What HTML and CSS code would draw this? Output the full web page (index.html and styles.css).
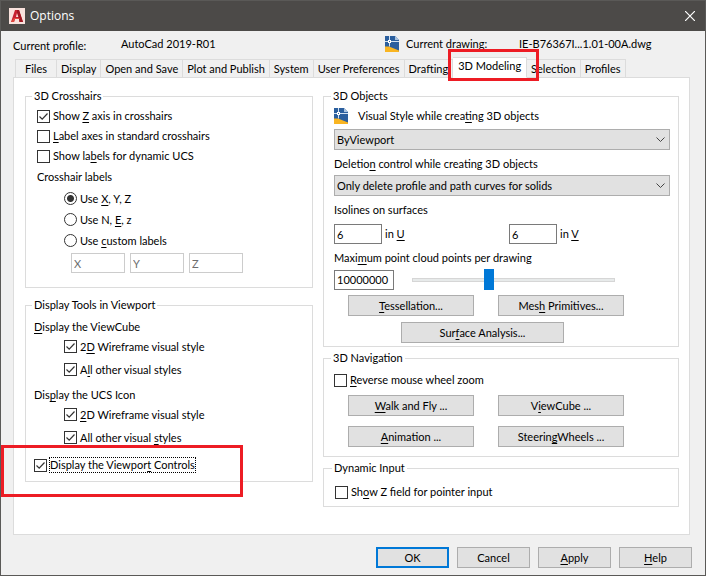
FILE: index.html
```
<!DOCTYPE html>
<html lang="en">
    <head>
        <title>Options</title>
        <meta charset="utf-8">
        <link rel="stylesheet" href="styles.css">
    </head>
    <body>
        <!-- dwg file icon, used twice -->
        <svg class="symbols" width="0" height="0">
            <symbol id="dwg" viewBox="0 0 14 16">
                <path d="M0 0h10l4 4v11H0z" fill="#2b5f9e"/>
                <path d="M10 0l4 4h-4z" fill="#a9c3df"/>
                <path d="M0 10.500h4l10 4V16H0z" fill="#f9b522"/>
                <path d="M0 5.500h14M4.500 0v10.500" stroke="#d5e3f1" fill="none"/>
                <rect x="3.500" y="4.500" width="2" height="2" fill="#2b5f9e" stroke="#fff"/>
            </symbol>
        </svg>
        <div class="window">
            <header class="titlebar">
                <svg class="logo" viewBox="0 0 16 16">
                    <rect width="16" height="16" fill="#f9e2dd"/>
                    <path d="M2 14L6 2h4l4 12h-3.500L10 11H6l-1 3z" fill="#c8202f"/>
                    <path d="M8 2h2l4 12h-3.500L10 11 8 5z" fill="#a01822"/>
                    <path d="M7 9l1-4 1.300 4z" fill="#f9e2dd"/>
                    <path d="M2 14l3-4h5l1 1H6l-1 3z" fill="#e0483f"/>
                </svg>
                <h1 class="title">Options</h1>
                <button class="close" aria-label="Close">
                    <svg viewBox="0 0 10 10"><path d="M0 0l10 10M10 0L0 10" stroke="#fff" stroke-width="1.200"/></svg>
                </button>
            </header>

            <div class="info">
                <span class="info-label">Current profile:</span>
                <span>AutoCad 2019-R01</span>
                <svg class="dwg"><use href="#dwg"/></svg>
                <span>Current drawing:</span>
                <span>IE-B76367I...1.01-00A.dwg</span>
            </div>

            <nav class="tabs" role="tablist">
                <button class="tab" role="tab">Files</button>
                <button class="tab" role="tab">Display</button>
                <button class="tab" role="tab">Open and Save</button>
                <button class="tab" role="tab">Plot and Publish</button>
                <button class="tab" role="tab">System</button>
                <button class="tab" role="tab">User Preferences</button>
                <button class="tab" role="tab">Drafting</button>
                <button class="tab active" role="tab" aria-selected="true">3D Modeling<span class="mark mark-tab"></span></button>
                <button class="tab" role="tab">Selection</button>
                <button class="tab" role="tab">Profiles</button>
            </nav>

            <main class="panel">
                <div class="column left">
                    <fieldset class="group crosshairs">
                        <legend>3D Crosshairs</legend>
                        <label class="check"><input type="checkbox" checked><span>Show <u>Z</u> axis in crosshairs</span></label>
                        <label class="check"><input type="checkbox"><span><u>L</u>abel axes in standard crosshairs</span></label>
                        <label class="check"><input type="checkbox"><span>Show la<u>b</u>els for dynamic UCS</span></label>
                        <p class="caption">Crosshair labels</p>
                        <div class="radios">
                            <label class="check"><input type="radio" name="labels" checked><span>Use <u>X</u>, Y, Z</span></label>
                            <label class="check"><input type="radio" name="labels"><span>Use N, <u>E</u>, z</span></label>
                            <label class="check"><input type="radio" name="labels"><span>Use <u>c</u>ustom labels</span></label>
                        </div>
                        <div class="axes">
                            <input type="text" value="X" aria-label="X label" disabled>
                            <input type="text" value="Y" aria-label="Y label" disabled>
                            <input type="text" value="Z" aria-label="Z label" disabled>
                        </div>
                    </fieldset>

                    <fieldset class="group tools">
                        <legend>Display Tools in Viewport</legend>
                        <p class="caption"><u>D</u>isplay the ViewCube</p>
                        <div class="styles">
                            <label class="check"><input type="checkbox" checked><span>2<u>D</u> Wireframe visual style</span></label>
                            <label class="check"><input type="checkbox" checked><span>A<u>l</u>l other visual styles</span></label>
                        </div>
                        <p class="caption">Dis<u>p</u>lay the UCS Icon</p>
                        <div class="styles">
                            <label class="check"><input type="checkbox" checked><span><u>2</u>D Wireframe visual style</span></label>
                            <label class="check"><input type="checkbox" checked><span>All other visual <u>s</u>tyles</span></label>
                        </div>
                        <div class="controls">
                            <label class="check"><input type="checkbox" checked><span class="focused">Display the Viewpor<u>t</u> Controls</span></label>
                            <span class="mark mark-controls"></span>
                        </div>
                    </fieldset>
                </div>

                <div class="column right">
                    <fieldset class="group objects">
                        <legend>3D Objects</legend>
                        <label class="with-icon" for="style"><svg class="dwg"><use href="#dwg"/></svg><span>Visual Style while crea<u>t</u>ing 3D objects</span></label>
                        <select id="style"><option>ByViewport</option></select>
                        <label class="caption" for="deletion">Deletio<u>n</u> control while creating 3D objects</label>
                        <select id="deletion"><option>Only delete profile and path curves for solids</option></select>
                        <p class="caption">Isolines on surfaces</p>
                        <div class="isolines">
                            <label><input type="text" value="6"><span>in <u>U</u></span></label>
                            <label><input type="text" value="6"><span>in <u>V</u></span></label>
                        </div>
                        <label class="caption" for="points">Maxi<u>m</u>um point cloud points per drawing</label>
                        <div class="points">
                            <input type="text" id="points" value="10000000">
                            <input type="range" aria-label="Point cloud points" min="0" max="100" value="37">
                        </div>
                        <div class="buttons">
                            <button class="btn"><u>T</u>essellation...</button>
                            <button class="btn">Mes<u>h</u> Primitives...</button>
                        </div>
                        <button class="btn surface">Sur<u>f</u>ace Analysis...</button>
                    </fieldset>

                    <fieldset class="group navigation">
                        <legend>3D Navigation</legend>
                        <label class="check"><input type="checkbox"><span><u>R</u>everse mouse wheel zoom</span></label>
                        <div class="buttons">
                            <button class="btn"><u>W</u>alk and Fly ...</button>
                            <button class="btn">V<u>i</u>ewCube ...</button>
                            <button class="btn"><u>A</u>nimation ...</button>
                            <button class="btn">Steerin<u>g</u>Wheels ...</button>
                        </div>
                    </fieldset>

                    <fieldset class="group dynamic">
                        <legend>Dynamic Input</legend>
                        <label class="check"><input type="checkbox"><span>Sh<u>o</u>w Z field for pointer input</span></label>
                    </fieldset>
                </div>
            </main>

            <footer class="footer">
                <button class="btn default">OK</button>
                <button class="btn">Cancel</button>
                <button class="btn"><u>A</u>pply</button>
                <button class="btn"><u>H</u>elp</button>
            </footer>
        </div>
    </body>
</html>
```
FILE: styles.css
```
*
{
    box-sizing: border-box;
}
body
{
    margin: 0;
    font-family: Lato, "Liberation Sans", sans-serif;
    font-size: 11px;
    line-height: 14px;
    color: #000;
}
button, input, select
{
    font: inherit;
    color: inherit;
    margin: 0;
}
p
{
    margin: 0;
}
u
{
    text-underline-offset: 2px;
    text-decoration-skip-ink: none;
}
.symbols
{
    position: absolute;
}
.window
{
    display: flex;
    flex-direction: column;
    min-height: 100vh;
    border: 1px solid #5a5957;
    background: #f0f0f0;
}

/* title bar */
.titlebar
{
    display: flex;
    align-items: center;
    height: 30px;
    padding: 0 10px 0 8px;
    background: #4c4a48;
    color: #fff;
}
.logo
{
    width: 16px;
    height: 16px;
}
.title
{
    flex: 1;
    margin: 0 0 0 5px;
    font-family: "Open Sans", "Noto Sans", sans-serif;
    font-size: 12px;
    font-weight: normal;
}
.close
{
    display: flex;
    padding: 0;
    border: 0;
    background: none;
}
.close svg
{
    width: 10px;
    height: 10px;
}

/* profile and drawing */
.info
{
    display: grid;
    grid-template-columns: 108fr 264fr 21px 113fr 186fr;
    align-items: center;
    height: 26px;
    padding-left: 12px;
}
.info-label
{
    padding-top: 3px;
}
.dwg
{
    width: 14px;
    height: 16px;
}

/* tabs */
.tabs
{
    display: flex;
    align-items: flex-end;
    height: 21px;
    padding-left: 14px;
    margin-bottom: -1px;
}
.tab
{
    min-width: 42px;
    height: 19px;
    padding: 0 4px;
    border: 1px solid #dcdcdc;
    border-left-width: 0;
    background: #f0f0f0;
    white-space: nowrap;
}
.tab:first-child
{
    border-left-width: 1px;
}
.tab.active
{
    position: relative;
    height: 21px;
    padding: 0 5px 3px;
    border-bottom-color: #fff;
    background: #fff;
}

/* red frames */
.mark
{
    position: absolute;
    z-index: 1;
    border: 3px solid #ed1c24;
    pointer-events: none;
}
.mark-tab
{
    inset: -9px -13px -4px -5px;
}
.mark-controls
{
    inset: -12px 61px -24px -33px;
}

/* content */
.panel
{
    flex: 1;
    display: grid;
    grid-template-columns: 288fr 356fr;
    gap: 10px;
    margin: 0 15px 0 12px;
    padding: 11px 10px 27px 11px;
    border: 1px solid #dcdcdc;
    background: #fff;
}
.column
{
    display: flex;
    flex-direction: column;
}
.left
{
    gap: 10px;
}
.right
{
    gap: 4px;
}
.group
{
    min-width: 0;
    margin: 0;
    border: 1px solid #dcdcdc;
}
.group legend
{
    margin-left: -3px;
    padding: 0 2px;
}
.check
{
    display: flex;
    align-items: center;
    gap: 3px;
    height: 20px;
}
.caption
{
    display: block;
    line-height: 16px;
}
input[type="checkbox"], input[type="radio"]
{
    appearance: none;
    width: 13px;
    height: 13px;
    border: 1px solid #333;
    background: #fff;
}
input[type="checkbox"]:checked
{
    background: url("data:image/svg+xml,%3Csvg xmlns='http://www.w3.org/2000/svg' viewBox='0 0 11 11'%3E%3Cpath d='M1.500 5.500l2.700 2.700 5.300-5.700' fill='none' stroke='%23333' stroke-width='1.200'/%3E%3C/svg%3E");
}
input[type="radio"]
{
    border-radius: 50%;
}
input[type="radio"]:checked
{
    background: radial-gradient(circle, #333 3px, #fff 4px);
}
input[type="text"]
{
    height: 20px;
    padding: 0 2px;
    border: 1px solid #7a7a7a;
    background: #fff;
}
input[type="text"]:disabled
{
    border-color: #ccc;
    color: #6d6d6d;
}
select
{
    display: block;
    width: 100%;
    height: 21px;
    padding: 0 2px;
    appearance: none;
    border: 1px solid #adadad;
    border-radius: 0;
    background: #e1e1e1 url("data:image/svg+xml,%3Csvg xmlns='http://www.w3.org/2000/svg' width='9' height='6'%3E%3Cpath d='M.5.5l4 4 4-4' fill='none' stroke='%23444'/%3E%3C/svg%3E") no-repeat right 4px center;
}
.btn
{
    height: 21px;
    padding: 0;
    border: 1px solid #adadad;
    background: #e1e1e1;
}

.crosshairs
{
    padding: 3px 11px 14px;
}
.crosshairs legend
{
    margin-left: -5px;
}
.crosshairs > .caption
{
    line-height: 22px;
}
.radios
{
    padding-left: 27px;
}
.radios .check
{
    height: 21px;
}
.axes
{
    display: flex;
    gap: 5px;
    padding: 2px 0 0 34px;
}
.axes input
{
    width: 54px;
}

.tools
{
    padding: 7px 8px 8px;
}
.tools legend
{
    margin-left: -2px;
}
.styles
{
    padding-left: 30px;
    margin-bottom: 6px;
}
.styles .check
{
    height: 23px;
}
.controls
{
    position: relative;
    margin-top: 8px;
}
.controls .check
{
    height: 16px;
}
.focused
{
    outline: 1px dotted #000;
}

.objects
{
    padding: 3px 8px 3px 10px;
}
.with-icon
{
    display: flex;
    align-items: center;
    gap: 10px;
    height: 20px;
    margin-bottom: 3px;
}
.objects .caption
{
    margin: 6px 0 3px;
}
.isolines
{
    display: grid;
    grid-template-columns: 175fr 161fr;
    padding-top: 3px;
}
.isolines label
{
    display: flex;
    align-items: center;
    gap: 3px;
}
.isolines input
{
    width: 48px;
}
.points
{
    display: flex;
    align-items: center;
    gap: 18px;
    padding-right: 55px;
}
.points input[type="text"]
{
    width: 60px;
}
input[type="range"]
{
    flex: 1;
    min-width: 0;
    height: 21px;
    appearance: none;
    background: none;
}
input[type="range"]::-webkit-slider-runnable-track
{
    height: 4px;
    border: 1px solid #d6d6d6;
    background: #e7eaea;
}
input[type="range"]::-webkit-slider-thumb
{
    appearance: none;
    width: 10px;
    height: 21px;
    margin-top: -10px;
    background: #0078d7;
}
.buttons
{
    display: grid;
    grid-template-columns: 126px 126px;
    gap: 10px 24px;
    margin: 5px 0 6px 14px;
}
.surface
{
    display: block;
    width: 163px;
    margin-left: 67px;
}

.navigation
{
    padding: 5px 8px 3px 10px;
}
.dynamic
{
    padding: 7px 10px 4px 11px;
}

.footer
{
    display: flex;
    justify-content: flex-end;
    gap: 8px;
    padding: 12px 13px 7px;
}
.footer .btn
{
    width: 73px;
}
.footer .default
{
    border: 2px solid #0078d7;
}
```
